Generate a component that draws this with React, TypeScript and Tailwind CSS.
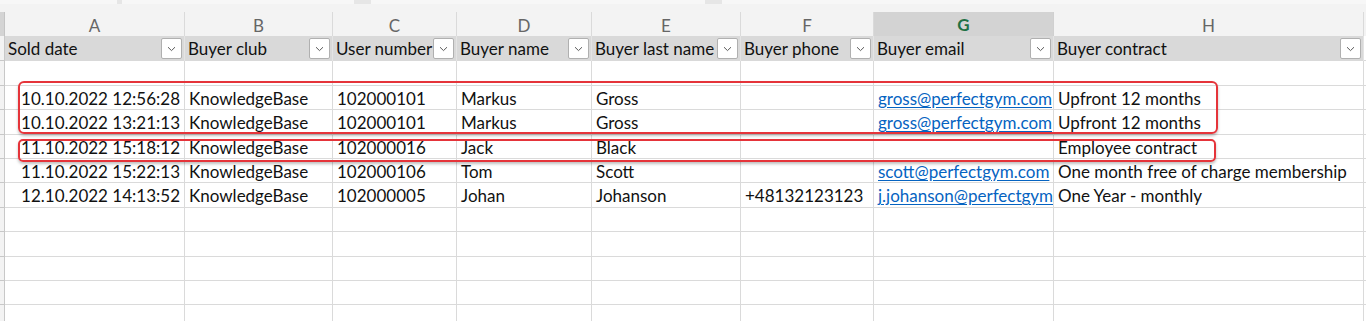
import React from "react";

const COLS = [180, 148, 124, 135, 149, 133, 180, 310];
const LETTERS = ["A", "B", "C", "D", "E", "F", "G", "H"];
const HEADERS = [
  "Sold date",
  "Buyer club",
  "User number",
  "Buyer name",
  "Buyer last name",
  "Buyer phone",
  "Buyer email",
  "Buyer contract",
];
const DATA: string[][] = [
  ["10.10.2022 12:56:28", "KnowledgeBase", "102000101", "Markus", "Gross", "", "gross@perfectgym.com", "Upfront 12 months"],
  ["10.10.2022 13:21:13", "KnowledgeBase", "102000101", "Markus", "Gross", "", "gross@perfectgym.com", "Upfront 12 months"],
  ["11.10.2022 15:18:12", "KnowledgeBase", "102000016", "Jack", "Black", "", "", "Employee contract"],
  ["11.10.2022 15:22:13", "KnowledgeBase", "102000106", "Tom", "Scott", "", "scott@perfectgym.com", "One month free of charge membership"],
  ["12.10.2022 14:13:52", "KnowledgeBase", "102000005", "Johan", "Johanson", "+48132123123", "j.johanson@perfectgym.com", "One Year - monthly"],
];
const ROW_H = [25, 24, 25, 24, 24, 25, 24, 25, 24, 24, 25];

const gridCols = "grid grid-cols-[5px_180px_148px_124px_135px_149px_133px_180px_310px_1fr]";

function Chevron() {
  return (
    <svg width="9" height="6" viewBox="0 0 9 6" fill="none">
      <path d="M1 1.2 L4.5 4.6 L8 1.2" stroke="#5a5a5a" strokeWidth="1" />
    </svg>
  );
}

export default function App() {
  const font = { fontFamily: "Lato, 'Open Sans', sans-serif" };
  return (
    <div className="relative w-[1366px] h-[321px] overflow-hidden bg-white text-[#111]" style={font}>
      {/* top strip */}
      <div className="flex h-[4px] bg-[#e6e6e6] gap-[5px]">
        <div className="w-[117px] bg-[#f7f7f7]" />
        <div className="w-[232px] bg-[#f7f7f7]" />
        <div className="w-[334px] bg-[#f7f7f7] ml-[12px]" />
        <div className="flex-1 bg-[#f7f7f7] ml-[12px]" />
      </div>
      {/* column letters */}
      <div className="bg-[#f3f3f3] pt-[8px]">
        <div className={`${gridCols} h-[24px]`}>
          <div className="bg-[#d4d4d4] border-r border-[#c4c4c4]" />
          {LETTERS.map((l) => (
            <div
              key={l}
              className={
                l === "G"
                  ? "flex items-center justify-center bg-[#d3d3d3] border-b-2 border-[#1e7145] text-[#1e7145] font-bold text-[17px] border-r border-r-[#d0d0d0]"
                  : "flex items-center justify-center text-[#666] text-[17px] border-r border-[#dadada]"
              }
            >
              {l}
            </div>
          ))}
          <div />
        </div>
      </div>
      {/* header row */}
      <div className={`${gridCols} h-[25px]`}>
        <div className="bg-[#f3f3f3] border-r border-b border-[#c8c8c8]" />
        {HEADERS.map((h) => (
          <div
            key={h}
            className="relative flex items-center overflow-hidden whitespace-nowrap bg-[#d9d9d9] border-r border-[#e4e4e4] pl-[3px] pt-[1px] text-[17px]"
          >
            {h}
            <div className="absolute right-[2px] top-[2px] w-[21px] h-[21px] bg-white border border-[#b0b0b0] rounded-[2px] flex items-center justify-center">
              <Chevron />
            </div>
          </div>
        ))}
        <div className="border-b border-[#dadada]" />
      </div>
      {/* rows */}
      {ROW_H.map((h, r) => {
        const d = r >= 1 && r <= 5 ? DATA[r - 1] : null;
        return (
          <div key={r} className={gridCols} style={{ height: h }}>
            <div className="bg-[#f3f3f3] border-r border-b border-[#c8c8c8]" />
            {COLS.map((_, c) => {
              const v = d ? d[c] : "";
              const isEmail = c === 6;
              return (
                <div
                  key={c}
                  className={
                    "flex items-center overflow-hidden whitespace-nowrap border-r border-b border-[#dadada] pt-[2px] text-[17px] " +
                    (c === 0 ? "justify-end pr-[4px]" : "pl-[4px]")
                  }
                >
                  {isEmail && v ? (
                    <span className="text-[#0563c1] underline underline-offset-2">{v}</span>
                  ) : (
                    v
                  )}
                </div>
              );
            })}
            <div className="border-b border-[#dadada]" />
          </div>
        );
      })}
      {/* highlight boxes */}
      <div className="absolute left-[18px] top-[81px] w-[1200px] h-[53px] rounded-[6px] border-2 border-[#e5343a] shadow-[0_2px_3px_rgba(0,0,0,0.25)]" />
      <div className="absolute left-[18px] top-[139px] w-[1198px] h-[23px] rounded-[5px] border-2 border-[#e5343a] shadow-[0_2px_3px_rgba(0,0,0,0.25)]" />
    </div>
  );
}
